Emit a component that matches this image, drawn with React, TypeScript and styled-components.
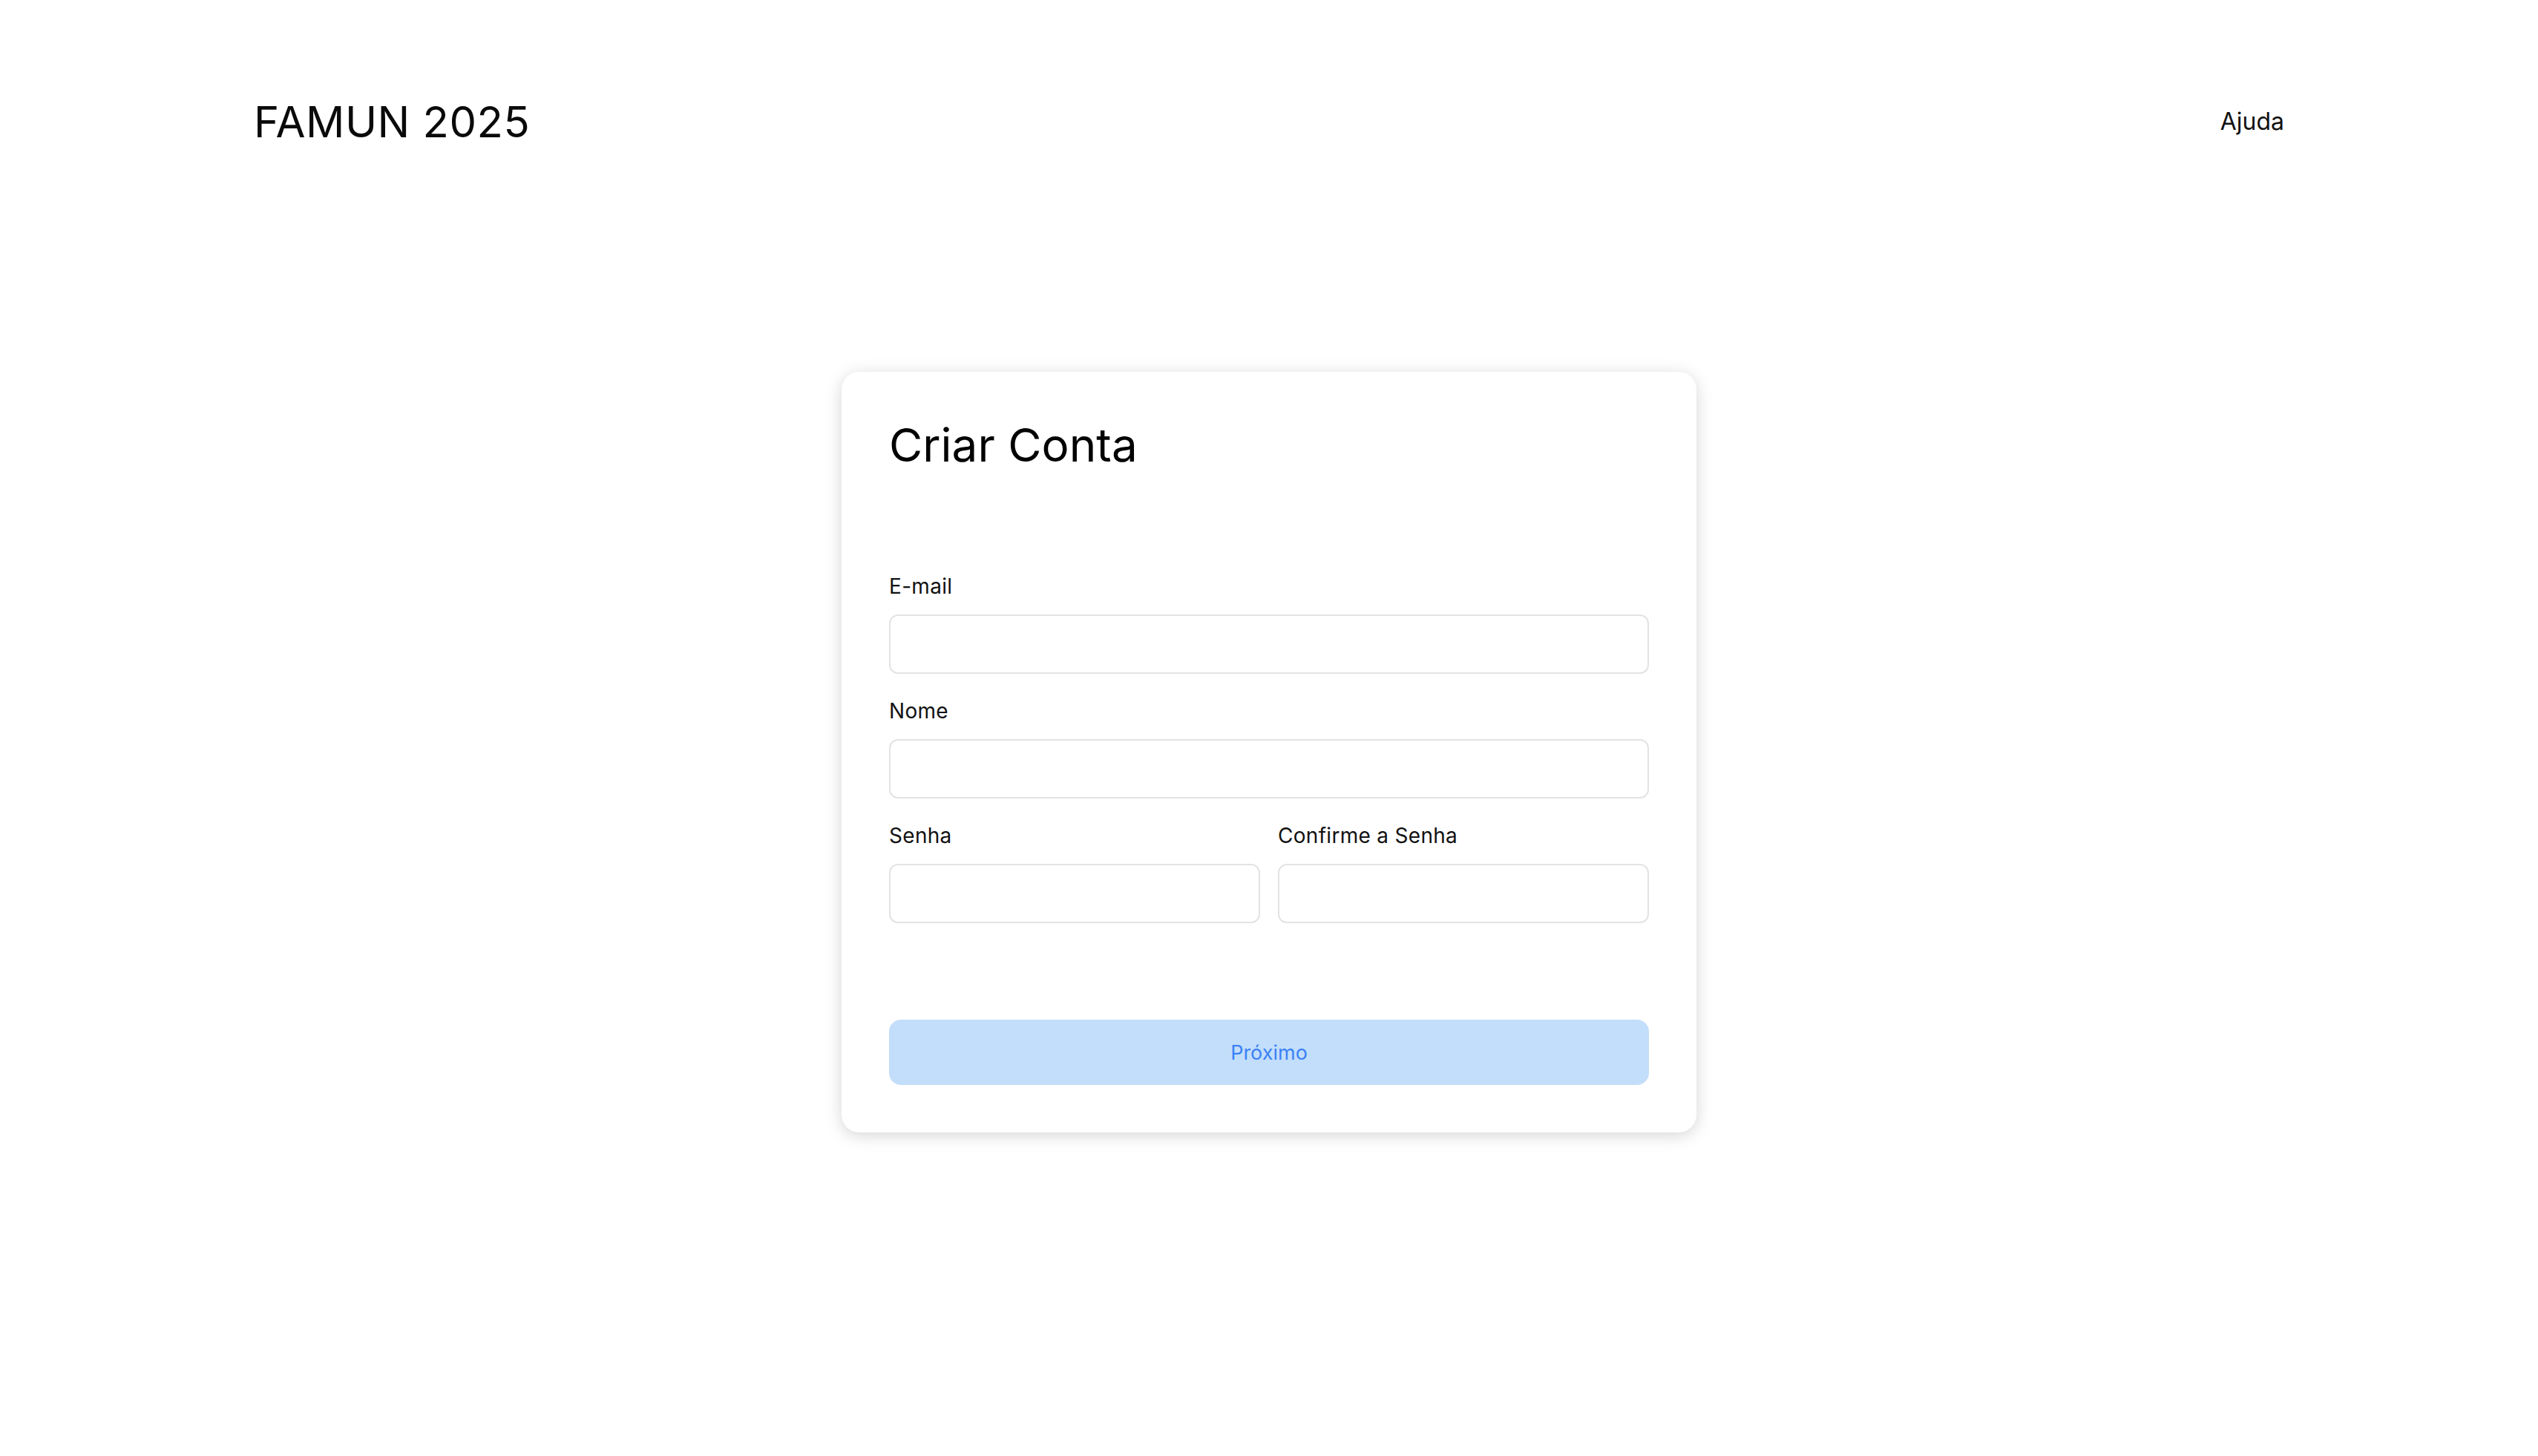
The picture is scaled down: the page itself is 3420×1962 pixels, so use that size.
import React from "react";
import styled, { createGlobalStyle } from "styled-components";

const Global = createGlobalStyle`
  html, body { margin: 0; padding: 0; background: #ffffff; }
  body { font-family: Inter, "Noto Sans", sans-serif; color: #000; }
  * { box-sizing: border-box; }
`;

const Page = styled.div`
  min-height: 1962px;
  display: flex;
  flex-direction: column;
`;

const Header = styled.header`
  display: flex;
  align-items: center;
  justify-content: space-between;
  padding: 0 10%;
  height: 328px;
`;

const Logo = styled.div`
  font-family: Inter, sans-serif;
  font-size: 58px;
  font-weight: 400;
  letter-spacing: 0.5px;
  line-height: 1;
  color: #0a0a0a;
`;

const NavLink = styled.a`
  font-family: Inter, sans-serif;
  font-size: 32px;
  line-height: 1;
  color: #111;
  text-decoration: none;
`;

const Main = styled.main`
  display: flex;
  justify-content: center;
  padding-top: 173px;
`;

const Card = styled.section`
  width: 1152px;
  background: #fff;
  border-radius: 24px;
  box-shadow: 0 4px 22px rgba(0, 0, 0, 0.17);
  padding: 64px;
  display: flex;
  flex-direction: column;
`;

const Title = styled.h1`
  margin: 0 0 137px 0;
  font-family: Inter, sans-serif;
  font-size: 62px;
  font-weight: 400;
  line-height: 70px;
  color: #000;
`;

const Form = styled.form`
  display: flex;
  flex-direction: column;
  gap: 32px;
`;

const Row = styled.div`
  display: grid;
  grid-template-columns: 1fr 1fr;
  gap: 24px;
`;

const Field = styled.div`
  display: flex;
  flex-direction: column;
`;

const Label = styled.label`
  font-family: Inter, sans-serif;
  font-size: 28px;
  letter-spacing: 0.3px;
  line-height: 36px;
  margin-bottom: 20px;
  color: #111;
`;

const Input = styled.input`
  height: 80px;
  border: 2px solid #e3e3e3;
  border-radius: 12px;
  padding: 0 20px;
  font-size: 28px;
  outline: none;
  background: #fff;
`;

const Button = styled.button`
  margin-top: 98px;
  height: 88px;
  border: none;
  border-radius: 16px;
  background: #c3defa;
  color: #3b82f6;
  font-family: Inter, sans-serif;
  font-size: 27px;
  cursor: default;
`;

export default function App() {
  return (
    <Page>
      <Global />
      <Header>
        <Logo>FAMUN 2025</Logo>
        <NavLink href="#">Ajuda</NavLink>
      </Header>
      <Main>
        <Card>
          <Title>Criar Conta</Title>
          <Form onSubmit={(e) => e.preventDefault()}>
            <Field>
              <Label>E-mail</Label>
              <Input type="email" />
            </Field>
            <Field>
              <Label>Nome</Label>
              <Input type="text" />
            </Field>
            <Row>
              <Field>
                <Label>Senha</Label>
                <Input type="password" />
              </Field>
              <Field>
                <Label>Confirme a Senha</Label>
                <Input type="password" />
              </Field>
            </Row>
            <Button type="button">Próximo</Button>
          </Form>
        </Card>
      </Main>
    </Page>
  );
}
